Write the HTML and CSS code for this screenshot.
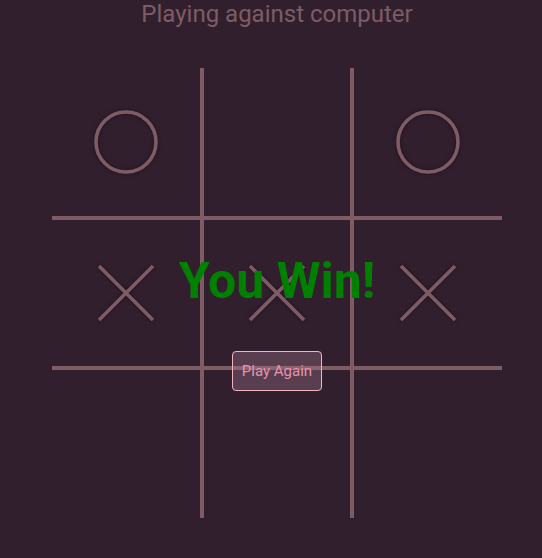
FILE: index.html
```html
<!DOCTYPE html>
<html>
<head>
<meta charset="utf-8">
<link rel="stylesheet" href="styles.css">
</head>
<body>
<div class="app">
  <h1 class="title">Playing against computer</h1>
  <div class="board">
    <div class="cell c-r c-b"><svg class="mark" viewBox="0 0 70 70"><circle cx="35" cy="35" r="30" /></svg></div>
    <div class="cell c-l c-r c-b"></div>
    <div class="cell c-l c-b"><svg class="mark" viewBox="0 0 70 70"><circle cx="35" cy="35" r="30" /></svg></div>
    <div class="cell c-r c-t c-b"><svg class="mark" viewBox="0 0 70 70"><path d="M8 8 L62 62 M62 8 L8 62" /></svg></div>
    <div class="cell c-l c-r c-t c-b"><svg class="mark" viewBox="0 0 70 70"><path d="M8 8 L62 62 M62 8 L8 62" /></svg></div>
    <div class="cell c-l c-t c-b"><svg class="mark" viewBox="0 0 70 70"><path d="M8 8 L62 62 M62 8 L8 62" /></svg></div>
    <div class="cell c-r c-t"></div>
    <div class="cell c-l c-r c-t"></div>
    <div class="cell c-l c-t"></div>
    <div class="overlay">
      <div class="result">You Win!</div>
      <button class="again">Play Again</button>
    </div>
  </div>
</div>
</body>
</html>
```
FILE: styles.css
```css
html, body {
  margin: 0;
  padding: 0;
  background: #321f2e;
}
body {
  font-family: Roboto, "Liberation Sans", sans-serif;
}
.app {
  padding-left: 52px;
  width: 450px;
}
.title {
  margin: 0;
  font-size: 24px;
  font-weight: 400;
  line-height: 28px;
  color: #7d5c65;
  text-align: center;
}
.board {
  position: relative;
  margin-top: 40px;
  width: 450px;
  display: grid;
  grid-template-columns: repeat(3, 150px);
  grid-template-rows: repeat(3, 150px);
}
.cell {
  box-sizing: border-box;
  display: flex;
  align-items: center;
  justify-content: center;
}
.c-l { border-left: 2px solid #7d5c65; }
.c-r { border-right: 2px solid #7d5c65; }
.c-t { border-top: 2px solid #7d5c65; }
.c-b { border-bottom: 2px solid #7d5c65; }
.mark {
  width: 70px;
  height: 70px;
  fill: none;
  stroke: #7d5c65;
  stroke-width: 3.6;
  filter: drop-shadow(0 0 2px rgba(0, 0, 0, 0.45));
}
.overlay {
  position: absolute;
  left: 0;
  top: 185px;
  width: 450px;
  display: flex;
  flex-direction: column;
  align-items: center;
  gap: 42px;
}
.result {
  font-size: 50px;
  font-weight: 700;
  line-height: 56px;
  color: #008000;
}
.again {
  box-sizing: border-box;
  width: 90px;
  height: 40px;
  padding: 0;
  border: 1px solid #f2b3c4;
  border-radius: 4px;
  background: rgba(160, 120, 140, 0.35);
  color: #e892b0;
  font-family: Roboto, "Liberation Sans", sans-serif;
  font-size: 15px;
}
```
